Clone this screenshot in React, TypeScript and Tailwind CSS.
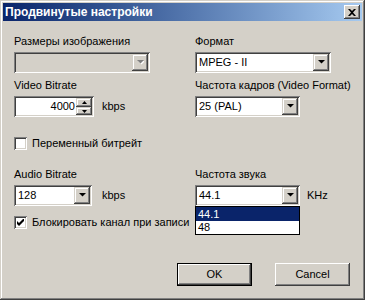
import React from 'react'

const raised =
  'shadow-[inset_-1px_-1px_#404040,inset_1px_1px_#ffffff,inset_-2px_-2px_#808080,inset_2px_2px_#d4d0c8]'
const dropRaised =
  'shadow-[inset_-1px_-1px_#404040,inset_1px_1px_#d4d0c8,inset_-2px_-2px_#808080,inset_2px_2px_#ffffff]'
const sunken =
  'shadow-[inset_1px_1px_#808080,inset_-1px_-1px_#ffffff,inset_2px_2px_#404040,inset_-2px_-2px_#d4d0c8]'

function Arrow({ disabled }: { disabled?: boolean }) {
  return (
    <svg width="7" height="5" viewBox="0 0 7 5">
      {disabled && <path d="M1 1h7L4.5 4.5z" fill="#ffffff" />}
      <path d="M0 0h7L3.5 3.5z" fill={disabled ? '#808080' : '#000000'} />
    </svg>
  )
}

function DropButton({ disabled }: { disabled?: boolean }) {
  return (
    <div className={`w-[16px] h-[17px] bg-[#d4d0c8] flex items-center justify-center ${dropRaised}`}>
      <Arrow disabled={disabled} />
    </div>
  )
}

function Combo({ width, value, disabled }: { width: string; value?: string; disabled?: boolean }) {
  return (
    <div className={`${width} h-[21px] p-[2px] flex items-center ${sunken} ${disabled ? 'bg-[#d4d0c8]' : 'bg-white'}`}>
      <div className="flex-1 pl-[2px] leading-[17px] text-black">{value}</div>
      <DropButton disabled={disabled} />
    </div>
  )
}

function SpinEdit() {
  return (
    <div className={`w-[80px] h-[21px] p-[2px] flex bg-white ${sunken}`}>
      <div className="flex-1 text-right pr-[1px] leading-[17px]">4000</div>
      <div className="w-[16px] flex flex-col">
        <div className={`h-[9px] bg-[#d4d0c8] flex items-center justify-center ${dropRaised}`}>
          <svg width="5" height="3" viewBox="0 0 5 3">
            <path d="M2.5 0L5 3H0z" fill="#000" />
          </svg>
        </div>
        <div className={`h-[8px] bg-[#d4d0c8] flex items-center justify-center ${dropRaised}`}>
          <svg width="5" height="3" viewBox="0 0 5 3">
            <path d="M0 0h5L2.5 3z" fill="#000" />
          </svg>
        </div>
      </div>
    </div>
  )
}

function CheckBox({ checked, label }: { checked?: boolean; label: string }) {
  return (
    <div className="flex items-center h-[13px]">
      <div className={`w-[13px] h-[13px] bg-white flex items-center justify-center ${sunken}`}>
        {checked && (
          <svg width="7" height="7" viewBox="0 0 7 7">
            <path d="M0 2v3l2 2 5-5V-1L2 4z" fill="#000" />
          </svg>
        )}
      </div>
      <span className="ml-[5px] whitespace-nowrap">{label}</span>
    </div>
  )
}

function Button({ label, isDefault }: { label: string; isDefault?: boolean }) {
  return (
    <div className={`w-[75px] h-[23px] ${isDefault ? 'border border-black' : ''}`}>
      <div className={`w-full h-full bg-[#d4d0c8] flex items-center justify-center ${raised}`}>{label}</div>
    </div>
  )
}

export default function App() {
  return (
    <div
      className={`w-[365px] h-[300px] bg-[#d4d0c8] p-[3px] flex flex-col text-[11px] text-black shadow-[inset_-1px_-1px_#404040,inset_1px_1px_#d4d0c8,inset_-2px_-2px_#808080,inset_2px_2px_#ffffff]`}
      style={{ fontFamily: '"Liberation Sans", Arial, sans-serif' }}
    >
      <div className="h-[18px] flex items-center bg-gradient-to-r from-[#0a246a] to-[#a6caf0] pl-[2px] pr-[2px]">
        <span className="flex-1 text-white font-bold text-[12px]">Продвинутые настройки</span>
        <div className={`w-[16px] h-[14px] bg-[#d4d0c8] flex items-center justify-center ${raised}`}>
          <svg width="8" height="7" viewBox="0 0 8 7">
            <path d="M0 0h2l2 2 2-2h2L5 3.5 8 7H6L4 5 2 7H0l3-3.5z" fill="#000" />
          </svg>
        </div>
      </div>

      <div className="flex-1 flex flex-col pl-[11px]">
        <div className="flex mt-[14px]">
          <div className="w-[181px]">
            <div className="h-[13px] leading-[13px]">Размеры изображения</div>
            <div className="mt-[4px]">
              <Combo width="w-[136px]" disabled />
            </div>
          </div>
          <div>
            <div className="h-[13px] leading-[13px]">Формат</div>
            <div className="mt-[4px]">
              <Combo width="w-[136px]" value="MPEG - II" />
            </div>
          </div>
        </div>

        <div className="flex mt-[6px]">
          <div className="w-[181px]">
            <div className="h-[13px] leading-[13px]">Video Bitrate</div>
            <div className="mt-[4px] flex items-center">
              <SpinEdit />
              <span className="ml-[8px]">kbps</span>
            </div>
          </div>
          <div>
            <div className="h-[13px] leading-[13px]">Частота кадров (Video Format)</div>
            <div className="mt-[4px]">
              <Combo width="w-[105px]" value="25 (PAL)" />
            </div>
          </div>
        </div>

        <div className="mt-[20px]">
          <CheckBox label="Переменный битрейт" />
        </div>

        <div className="flex mt-[18px]">
          <div className="w-[181px]">
            <div className="h-[13px] leading-[13px]">Audio Bitrate</div>
            <div className="mt-[4px] flex items-center">
              <Combo width="w-[78px]" value="128" />
              <span className="ml-[10px]">kbps</span>
            </div>
          </div>
          <div>
            <div className="h-[13px] leading-[13px]">Частота звука</div>
            <div className="mt-[4px] flex items-center">
              <div className="relative">
                <Combo width="w-[105px]" value="44.1" />
                <div className="absolute left-0 top-[21px] w-[105px] bg-white border border-black z-10">
                  <div className="h-[14px] leading-[14px] pl-[2px] bg-[#0a246a] text-white">44.1</div>
                  <div className="h-[13px] leading-[13px] pl-[2px]">48</div>
                </div>
              </div>
              <span className="ml-[7px]">KHz</span>
            </div>
          </div>
        </div>

        <div className="mt-[10px]">
          <CheckBox checked label="Блокировать канал при записи" />
        </div>

        <div className="flex mt-[34px] pl-[163px] gap-[23px]">
          <Button label="OK" isDefault />
          <Button label="Cancel" />
        </div>
      </div>
    </div>
  )
}
